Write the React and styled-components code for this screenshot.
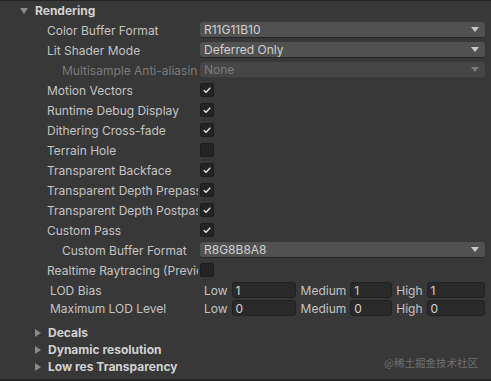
import styled, { createGlobalStyle } from "styled-components";

const Global = createGlobalStyle`
  html, body { margin: 0; padding: 0; background: #383838; }
  body { font-family: Inter, "Noto Sans", sans-serif; font-size: 12px; color: #c4c4c4; }
`;

const Panel = styled.div`
  position: relative;
  width: 491px;
  height: 381px;
  box-sizing: border-box;
  background: #383838;
  border-top: 1px solid #232323;
  border-bottom: 2px solid #232323;
  overflow: hidden;
`;

const Header = styled.div`
  display: flex;
  align-items: center;
  height: ${(p) => p.h || 19}px;
  padding-left: ${(p) => p.indent}px;
  font-weight: 700;
  color: #d2d2d2;
  gap: 7px;
`;

const Arrow = styled.span`
  width: 0;
  height: 0;
  ${(p) =>
    p.open
      ? `border-left: 4px solid transparent; border-right: 4px solid transparent; border-top: 6px solid #8a8a8a;`
      : `border-top: 4px solid transparent; border-bottom: 4px solid transparent; border-left: 6px solid #8a8a8a;`}
`;

const Row = styled.div`
  display: flex;
  align-items: center;
  height: ${(p) => p.h || 20}px;
  padding-right: 6px;
`;

const Label = styled.div`
  box-sizing: border-box;
  width: 198px;
  margin-right: 2px;
  flex-shrink: 0;
  padding-left: ${(p) => 47 + (p.indent || 0)}px;
  white-space: nowrap;
  overflow: hidden;
  color: ${(p) => (p.disabled ? "#7b7b7b" : "#c4c4c4")};
`;

const Select = styled.div`
  flex: 1;
  display: flex;
  align-items: center;
  justify-content: space-between;
  height: 16px;
  box-sizing: border-box;
  padding: 0 6px 0 4px;
  border-radius: 3px;
  background: ${(p) => (p.disabled ? "#464646" : "#515151")};
  border-bottom: 1px solid ${(p) => (p.disabled ? "#3c3c3c" : "#262626")};
  color: ${(p) => (p.disabled ? "#7b7b7b" : "#d0d0d0")};
`;

const Caret = styled.span`
  width: 0;
  height: 0;
  border-left: 4px solid transparent;
  border-right: 4px solid transparent;
  border-top: 5px solid ${(p) => (p.disabled ? "#7b7b7b" : "#c8c8c8")};
`;

const Box = styled.div`
  width: 14px;
  height: 14px;
  box-sizing: border-box;
  border-radius: 2px;
  background: #242424;
  border: 1px solid #1c1c1c;
  display: flex;
  align-items: center;
  justify-content: center;
`;

const LodGroup = styled.div`
  margin-top: 1px;
`;

const Lod = styled.div`
  flex: 1;
  display: flex;
  align-items: center;
  padding-left: 4px;
`;

const LodLabel = styled.span`
  margin-right: 4px;
  color: #c4c4c4;
`;

const NumInput = styled.div`
  ${(p) => (p.w ? `width: ${p.w}px;` : "flex: 1;")}
  height: 16px;
  box-sizing: border-box;
  margin-right: ${(p) => p.mr || 0}px;
  padding-left: 3px;
  display: flex;
  align-items: center;
  background: #2a2a2a;
  border: 1px solid #212121;
  border-radius: 3px;
  color: #d2d2d2;
`;

const Foldouts = styled.div`
  margin-top: 7px;
`;

const Watermark = styled.div`
  position: absolute;
  right: 13px;
  bottom: 9px;
  font-size: 10.5px;
  color: #707070;
  font-family: "Noto Sans CJK SC", sans-serif;
`;

function Check({ on }) {
  return (
    <Box>
      {on && (
        <svg width="10" height="10" viewBox="0 0 10 10">
          <path d="M1.8 5.2 L4 7.3 L8.3 2.7" fill="none" stroke="#e2e2e2" strokeWidth="1.4" />
        </svg>
      )}
    </Box>
  );
}

const rows = [
  { label: "Color Buffer Format", select: "R11G11B10" },
  { label: "Lit Shader Mode", select: "Deferred Only" },
  { label: "Multisample Anti-aliasing Quality", select: "None", indent: 15, disabled: true },
  { label: "Motion Vectors", check: true },
  { label: "Runtime Debug Display", check: true },
  { label: "Dithering Cross-fade", check: true },
  { label: "Terrain Hole", check: false },
  { label: "Transparent Backface", check: true },
  { label: "Transparent Depth Prepass", check: true },
  { label: "Transparent Depth Postpass", check: true },
  { label: "Custom Pass", check: true },
  { label: "Custom Buffer Format", select: "R8G8B8A8", indent: 15 },
  { label: "Realtime Raytracing (Preview)", check: false },
];

const lods = [
  { label: "LOD Bias", v: "1" },
  { label: "Maximum LOD Level", v: "0" },
];

export default function App() {
  return (
    <>
      <Global />
      <Panel>
        <Header indent={20}>
          <Arrow open />
          Rendering
        </Header>
        {rows.map((r) => (
          <Row key={r.label}>
            <Label indent={r.indent} disabled={r.disabled}>{r.label}</Label>
            {r.select !== undefined ? (
              <Select disabled={r.disabled}>
                {r.select}
                <Caret disabled={r.disabled} />
              </Select>
            ) : (
              <Check on={r.check} />
            )}
          </Row>
        ))}
        <LodGroup>
          {lods.map((l) => (
            <Row key={l.label} h={18}>
              <Label indent={3}>{l.label}</Label>
              <Lod>
                <LodLabel>Low</LodLabel>
                <NumInput w={64} mr={5}>{l.v}</NumInput>
                <LodLabel>Medium</LodLabel>
                <NumInput w={42} mr={4}>{l.v}</NumInput>
                <LodLabel>High</LodLabel>
                <NumInput>{l.v}</NumInput>
              </Lod>
            </Row>
          ))}
        </LodGroup>
        <Foldouts>
          {["Decals", "Dynamic resolution", "Low res Transparency"].map((f) => (
            <Header key={f} indent={35} h={17}>
              <Arrow />
              {f}
            </Header>
          ))}
        </Foldouts>
        <Watermark>@稀土掘金技术社区</Watermark>
      </Panel>
    </>
  );
}
